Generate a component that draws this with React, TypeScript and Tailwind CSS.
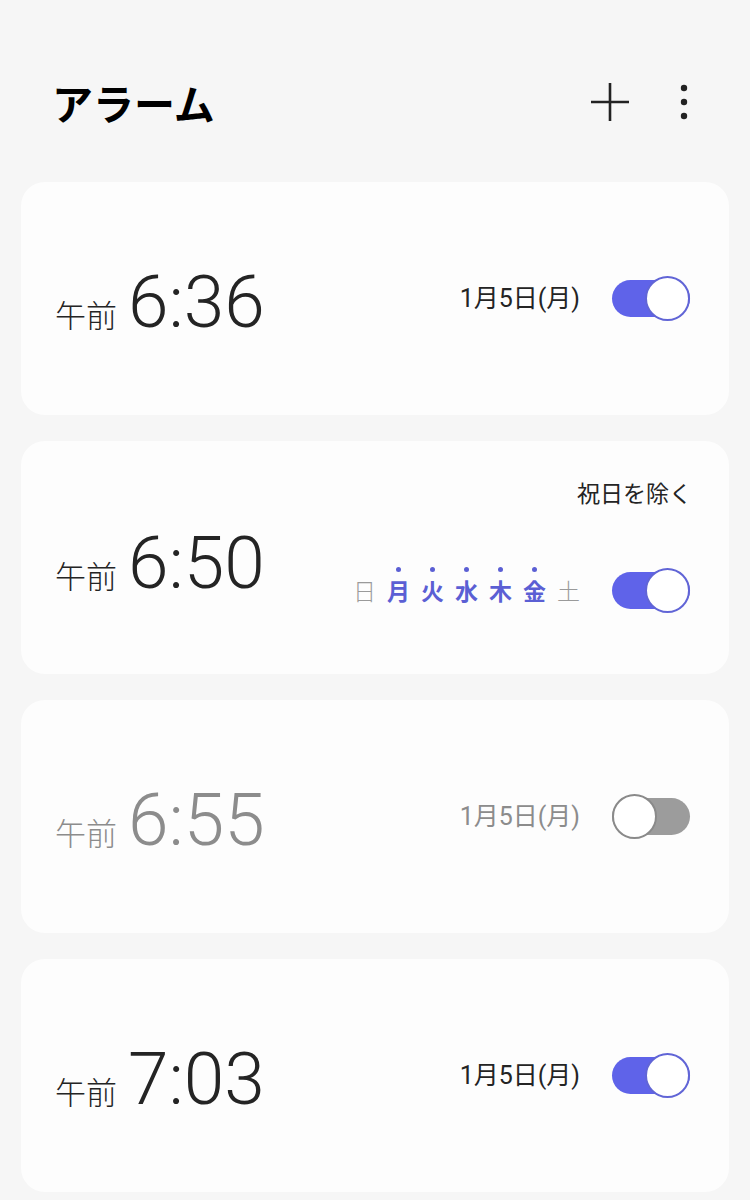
import { FC, ReactElement } from "react";

const jp = "font-['Roboto','Noto_Sans_CJK_JP',sans-serif]";

const Toggle: FC<{ on: boolean }> = ({ on }): ReactElement => (
  <div className="relative w-[78px] h-[45px] shrink-0">
    <div
      className={`absolute left-0 right-0 top-[4px] bottom-[4px] rounded-full ${on ? "bg-[#5f63e9]" : "bg-[#9c9c9c]"}`}
    />
    <div
      className={`absolute top-0 w-[45px] h-[45px] rounded-full bg-white border-2 ${
        on ? "right-0 border-[#6165d6]" : "left-0 border-[#8a8a8a]"
      }`}
    />
  </div>
);

const Time: FC<{ value: string; dim?: boolean }> = ({ value, dim }): ReactElement => (
  <div className={`flex items-baseline ${dim ? "text-[#8c8c8c]" : "text-[#242424]"}`}>
    <span className="font-['Noto_Sans_CJK_JP',sans-serif] text-[31px] font-light leading-none">午前</span>
    <span className="ml-[11px] font-['Roboto',sans-serif] text-[73px] font-light leading-none">
      {value}
    </span>
  </div>
);

const SimpleCard: FC<{ time: string; on: boolean }> = ({ time, on }): ReactElement => (
  <div className="h-[233px] rounded-[24px] bg-[#fdfdfd] flex items-center justify-between pl-[34px] pr-[39px]">
    <div className="pt-[8px]">
      <Time value={time} dim={!on} />
    </div>
    <div className="flex items-center gap-[32px]">
      <span className={`${jp} text-[25px] leading-none ${on ? "text-[#242424]" : "text-[#8c8c8c]"}`}>1月5日(月)</span>
      <Toggle on={on} />
    </div>
  </div>
);

const days = [
  { d: "日", on: false },
  { d: "月", on: true },
  { d: "火", on: true },
  { d: "水", on: true },
  { d: "木", on: true },
  { d: "金", on: true },
  { d: "土", on: false },
];

const RepeatCard: FC = (): ReactElement => (
  <div className="h-[233px] rounded-[24px] bg-[#fdfdfd] flex justify-between pl-[34px] pr-[39px]">
    <div className="self-center pt-[12px]">
      <Time value="6:50" />
    </div>
    <div className="flex flex-col items-end pt-[35px]">
      <span className="font-['Noto_Sans_CJK_JP',sans-serif] text-[23px] leading-[32px] text-[#242424] -mr-[2px]">
        祝日を除く
      </span>
      <div className="mt-[60px] flex items-center gap-[32px]">
        <div className="flex gap-[11px]">
          {days.map((x) => (
            <div key={x.d} className="relative w-[23px] flex justify-center">
              {x.on && <span className="absolute -top-[12px] w-[5px] h-[5px] rounded-full bg-[#5b5fd4]" />}
              <span
                className={`font-['Noto_Sans_CJK_JP',sans-serif] text-[23px] leading-none ${
                  x.on ? "font-bold text-[#5b5fd4]" : "font-light text-[#9a9a9a]"
                }`}
              >
                {x.d}
              </span>
            </div>
          ))}
        </div>
        <Toggle on />
      </div>
    </div>
  </div>
);

export default function App(): ReactElement {
  return (
    <div className="w-[750px] h-[1200px] bg-[#f6f6f6] overflow-hidden">
      <header className="mt-[40px] h-[124px] flex items-center justify-between pl-[52px] pr-[62px]">
        <h1 className="font-['Noto_Sans_CJK_JP',sans-serif] text-[41px] font-bold text-black leading-none">アラーム</h1>
        <div className="flex items-center gap-[50px]">
          <svg width="40" height="40" viewBox="0 0 40 40" className="text-[#222]">
            <path d="M20 1v38M1 20h38" stroke="currentColor" strokeWidth="2.6" />
          </svg>
          <svg width="8" height="36" viewBox="0 0 8 36" className="text-[#222]">
            <circle cx="4" cy="4" r="3.2" fill="currentColor" />
            <circle cx="4" cy="18" r="3.2" fill="currentColor" />
            <circle cx="4" cy="32" r="3.2" fill="currentColor" />
          </svg>
        </div>
      </header>
      <main className="pt-[18px] px-[21px] flex flex-col gap-[26px]">
        <SimpleCard time="6:36" on />
        <RepeatCard />
        <SimpleCard time="6:55" on={false} />
        <SimpleCard time="7:03" on />
      </main>
    </div>
  );
}
